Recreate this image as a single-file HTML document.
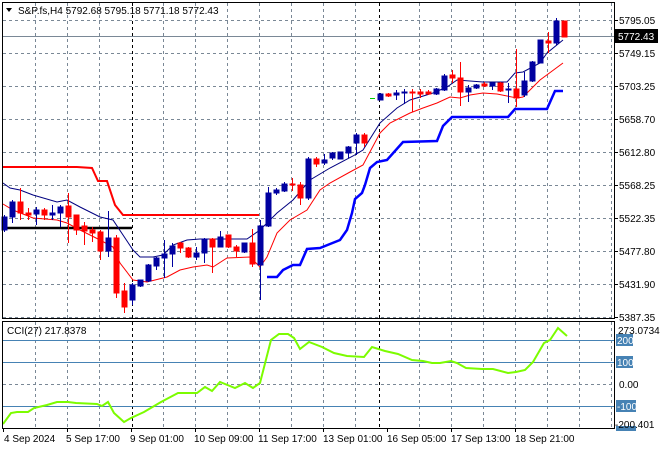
<!DOCTYPE html>
<html><head><meta charset="utf-8"><style>
html,body{margin:0;padding:0;background:#fff;width:660px;height:450px;overflow:hidden}
svg{display:block;font-family:"Liberation Sans",sans-serif;font-size:10px}
</style></head><body>
<svg width="660" height="450" viewBox="0 0 660 450" xmlns="http://www.w3.org/2000/svg">
<rect width="660" height="450" fill="#fff"/>
<g stroke="#7a8896" stroke-width="1" stroke-dasharray="3,3" shape-rendering="crispEdges">
<line x1="3" y1="20.5" x2="614" y2="20.5"/><line x1="3" y1="53.5" x2="614" y2="53.5"/><line x1="3" y1="86.5" x2="614" y2="86.5"/><line x1="3" y1="119.5" x2="614" y2="119.5"/><line x1="3" y1="152.5" x2="614" y2="152.5"/><line x1="3" y1="185.5" x2="614" y2="185.5"/><line x1="3" y1="218.5" x2="614" y2="218.5"/><line x1="3" y1="251.5" x2="614" y2="251.5"/><line x1="3" y1="284.5" x2="614" y2="284.5"/><line x1="3" y1="317.5" x2="614" y2="317.5"/>
<line x1="35.5" y1="3" x2="35.5" y2="318"/><line x1="67.5" y1="3" x2="67.5" y2="318"/><line x1="99.5" y1="3" x2="99.5" y2="318"/><line x1="163.5" y1="3" x2="163.5" y2="318"/><line x1="195.5" y1="3" x2="195.5" y2="318"/><line x1="227.5" y1="3" x2="227.5" y2="318"/><line x1="259.5" y1="3" x2="259.5" y2="318"/><line x1="291.5" y1="3" x2="291.5" y2="318"/><line x1="323.5" y1="3" x2="323.5" y2="318"/><line x1="355.5" y1="3" x2="355.5" y2="318"/><line x1="419.5" y1="3" x2="419.5" y2="318"/><line x1="451.5" y1="3" x2="451.5" y2="318"/><line x1="483.5" y1="3" x2="483.5" y2="318"/><line x1="515.5" y1="3" x2="515.5" y2="318"/><line x1="547.5" y1="3" x2="547.5" y2="318"/><line x1="579.5" y1="3" x2="579.5" y2="318"/><line x1="611.5" y1="3" x2="611.5" y2="318"/>
<line x1="3" y1="384.5" x2="614" y2="384.5"/>
<line x1="35.5" y1="322" x2="35.5" y2="428"/><line x1="67.5" y1="322" x2="67.5" y2="428"/><line x1="99.5" y1="322" x2="99.5" y2="428"/><line x1="163.5" y1="322" x2="163.5" y2="428"/><line x1="195.5" y1="322" x2="195.5" y2="428"/><line x1="227.5" y1="322" x2="227.5" y2="428"/><line x1="259.5" y1="322" x2="259.5" y2="428"/><line x1="291.5" y1="322" x2="291.5" y2="428"/><line x1="323.5" y1="322" x2="323.5" y2="428"/><line x1="355.5" y1="322" x2="355.5" y2="428"/><line x1="419.5" y1="322" x2="419.5" y2="428"/><line x1="451.5" y1="322" x2="451.5" y2="428"/><line x1="483.5" y1="322" x2="483.5" y2="428"/><line x1="515.5" y1="322" x2="515.5" y2="428"/><line x1="547.5" y1="322" x2="547.5" y2="428"/><line x1="579.5" y1="322" x2="579.5" y2="428"/><line x1="611.5" y1="322" x2="611.5" y2="428"/>
</g>
<g stroke="#000" stroke-dasharray="3,3" shape-rendering="crispEdges">
<line x1="132.5" y1="3" x2="132.5" y2="318"/><line x1="379.5" y1="3" x2="379.5" y2="318"/>
<line x1="132.5" y1="322" x2="132.5" y2="428"/><line x1="379.5" y1="322" x2="379.5" y2="428"/>
</g>
<line x1="3" y1="36.5" x2="614" y2="36.5" stroke="#7a8896" shape-rendering="crispEdges"/>
<polyline points="3,167 77,167 92,168 98,181 107,181 115,205 123,215 259,215" fill="none" stroke="#f00" stroke-width="2"/>
<line x1="3" y1="228" x2="132" y2="228" stroke="#000" stroke-width="2.5"/>
<polyline points="267,277 277,277 283,270 293,265 300,265 307,249 320,248 330,244 340,240 347,230 352,213 355,199 362,193 365,185 370,168 377,162 387,160 403,142 437,141 443,126 452,117 508,117 515,109 547,109 555,91 563,91" fill="none" stroke="#0000ff" stroke-width="2.5"/>
<polyline points="3,183 10,188 20,190 33,195 57,202 67,200 80,207 100,217 113,220 133,250 140,257 153,257 163,255 173,245 187,240 200,239 247,239 260,230 277,213 293,200 310,180 330,168 353,156 363,150 380,123 397,108 410,100 420,97 433,93 447,87 457,80 483,82 507,82 515,73 523,72 540,63 547,53 563,40" fill="none" stroke="#000080" stroke-width="1"/>
<polyline points="3,204 13,210 33,218 57,220 67,223 80,230 100,240 113,247 120,263 133,280 147,282 167,277 180,270 193,267 207,265 213,267 227,258 250,257 260,267 267,257 277,233 290,220 307,210 320,190 330,183 350,172 363,165 380,133 390,123 410,113 423,108 437,103 450,97 460,98 470,95 483,93 497,94 517,98 523,97 540,80 563,63" fill="none" stroke="#f00" stroke-width="1"/>
<g shape-rendering="crispEdges" stroke-width="1">
<g stroke="#0000a0" fill="#0000a0">
<line x1="4.5" y1="215" x2="4.5" y2="232"/><rect x="2" y="217" width="5" height="13"/>
<line x1="12.5" y1="200" x2="12.5" y2="223"/><rect x="10" y="202" width="5" height="15"/>
<line x1="36.5" y1="207" x2="36.5" y2="225"/><rect x="34" y="210" width="5" height="4"/>
<line x1="52.5" y1="205" x2="52.5" y2="220"/><rect x="50" y="213" width="5" height="2"/>
<line x1="60.5" y1="205" x2="60.5" y2="227"/><rect x="58" y="207" width="5" height="6"/>
<line x1="108.5" y1="211" x2="108.5" y2="257"/><rect x="106" y="238" width="5" height="13"/>
<line x1="132.5" y1="283" x2="132.5" y2="305"/><rect x="130" y="285" width="5" height="15"/>
<line x1="140.5" y1="280" x2="140.5" y2="287"/><rect x="138" y="280" width="5" height="6"/>
<line x1="148.5" y1="264" x2="148.5" y2="282"/><rect x="146" y="265" width="5" height="16"/>
<line x1="156.5" y1="257" x2="156.5" y2="270"/><rect x="154" y="258" width="5" height="8"/>
<line x1="164.5" y1="240" x2="164.5" y2="278"/><rect x="162" y="254" width="5" height="4"/>
<line x1="172.5" y1="243" x2="172.5" y2="267"/><rect x="170" y="246" width="5" height="8"/>
<line x1="196.5" y1="247" x2="196.5" y2="260"/><rect x="194" y="253" width="5" height="4"/>
<line x1="204.5" y1="238" x2="204.5" y2="263"/><rect x="202" y="239" width="5" height="14"/>
<line x1="220.5" y1="231" x2="220.5" y2="247"/><rect x="218" y="237" width="5" height="10"/>
<line x1="244.5" y1="243" x2="244.5" y2="253"/><rect x="242" y="243" width="5" height="9"/>
<line x1="260.5" y1="220" x2="260.5" y2="300"/><rect x="258" y="226" width="5" height="39"/>
<line x1="268.5" y1="187" x2="268.5" y2="227"/><rect x="266" y="193" width="5" height="33"/>
<line x1="276.5" y1="188" x2="276.5" y2="195"/><rect x="274" y="190" width="5" height="3"/>
<line x1="284.5" y1="182" x2="284.5" y2="192"/><rect x="282" y="184" width="5" height="7"/>
<line x1="308.5" y1="157" x2="308.5" y2="200"/><rect x="306" y="159" width="5" height="39"/>
<line x1="324.5" y1="154" x2="324.5" y2="165"/><rect x="322" y="160" width="5" height="3"/>
<line x1="332.5" y1="152" x2="332.5" y2="160"/><rect x="330" y="153" width="5" height="5"/>
<rect x="338" y="152" width="5" height="7"/>
<line x1="348.5" y1="146" x2="348.5" y2="158"/><rect x="346" y="147" width="5" height="6"/>
<line x1="356.5" y1="133" x2="356.5" y2="155"/><rect x="354" y="135" width="5" height="8"/>
<line x1="380.5" y1="93" x2="380.5" y2="100"/><rect x="378" y="94" width="5" height="6"/>
<line x1="396.5" y1="90" x2="396.5" y2="100"/><rect x="394" y="93" width="5" height="2"/>
<line x1="404.5" y1="89" x2="404.5" y2="104"/><rect x="402" y="92" width="5" height="1"/>
<line x1="436.5" y1="88" x2="436.5" y2="95"/><rect x="434" y="89" width="5" height="5"/>
<line x1="444.5" y1="74" x2="444.5" y2="91"/><rect x="442" y="76" width="5" height="14"/>
<line x1="468.5" y1="85" x2="468.5" y2="102"/><rect x="466" y="88" width="5" height="4"/>
<line x1="476.5" y1="84" x2="476.5" y2="89"/><rect x="474" y="85" width="5" height="3"/>
<line x1="492.5" y1="82" x2="492.5" y2="90"/><rect x="490" y="83" width="5" height="3"/>
<line x1="508.5" y1="83" x2="508.5" y2="103"/><rect x="506" y="89" width="5" height="1"/>
<line x1="524.5" y1="72" x2="524.5" y2="97"/><rect x="522" y="81" width="5" height="14"/>
<line x1="532.5" y1="61" x2="532.5" y2="82"/><rect x="530" y="62" width="5" height="19"/>
<rect x="538" y="40" width="5" height="23"/>
<line x1="556.5" y1="18" x2="556.5" y2="45"/><rect x="554" y="21" width="5" height="22"/>
</g>
<g stroke="#f00" fill="#f00">
<line x1="20.5" y1="188" x2="20.5" y2="220"/><rect x="18" y="202" width="5" height="11"/>
<line x1="28.5" y1="208" x2="28.5" y2="220"/><rect x="26" y="213" width="5" height="2"/>
<line x1="44.5" y1="208" x2="44.5" y2="220"/><rect x="42" y="210" width="5" height="5"/>
<line x1="68.5" y1="193" x2="68.5" y2="243"/><rect x="66" y="206" width="5" height="11"/>
<line x1="76.5" y1="215" x2="76.5" y2="235"/><rect x="74" y="215" width="5" height="15"/>
<line x1="84.5" y1="222" x2="84.5" y2="245"/><rect x="82" y="226" width="5" height="5"/>
<line x1="92.5" y1="227" x2="92.5" y2="242"/><rect x="90" y="230" width="5" height="3"/>
<line x1="100.5" y1="230" x2="100.5" y2="260"/><rect x="98" y="232" width="5" height="19"/>
<line x1="116.5" y1="235" x2="116.5" y2="298"/><rect x="114" y="238" width="5" height="55"/>
<line x1="124.5" y1="283" x2="124.5" y2="313"/><rect x="122" y="291" width="5" height="16"/>
<line x1="180.5" y1="242" x2="180.5" y2="253"/><rect x="178" y="243" width="5" height="5"/>
<line x1="188.5" y1="247" x2="188.5" y2="258"/><rect x="186" y="248" width="5" height="9"/>
<line x1="212.5" y1="238" x2="212.5" y2="273"/><rect x="210" y="239" width="5" height="8"/>
<line x1="228.5" y1="235" x2="228.5" y2="248"/><rect x="226" y="235" width="5" height="12"/>
<line x1="236.5" y1="245" x2="236.5" y2="257"/><rect x="234" y="247" width="5" height="4"/>
<line x1="252.5" y1="229" x2="252.5" y2="267"/><rect x="250" y="243" width="5" height="21"/>
<line x1="292.5" y1="178" x2="292.5" y2="191"/><rect x="290" y="184" width="5" height="1"/>
<line x1="300.5" y1="182" x2="300.5" y2="205"/><rect x="298" y="185" width="5" height="13"/>
<line x1="316.5" y1="157" x2="316.5" y2="167"/><rect x="314" y="159" width="5" height="5"/>
<line x1="364.5" y1="133" x2="364.5" y2="147"/><rect x="362" y="135" width="5" height="8"/>
<line x1="388.5" y1="93" x2="388.5" y2="97"/><rect x="386" y="94" width="5" height="2"/>
<line x1="412.5" y1="89" x2="412.5" y2="112"/><rect x="410" y="92" width="5" height="1"/>
<line x1="420.5" y1="89" x2="420.5" y2="98"/><rect x="418" y="92" width="5" height="2"/>
<line x1="428.5" y1="90" x2="428.5" y2="95"/><rect x="426" y="92" width="5" height="2"/>
<line x1="452.5" y1="70" x2="452.5" y2="83"/><rect x="450" y="75" width="5" height="3"/>
<line x1="460.5" y1="62" x2="460.5" y2="106"/><rect x="458" y="78" width="5" height="14"/>
<line x1="484.5" y1="82" x2="484.5" y2="87"/><rect x="482" y="84" width="5" height="2"/>
<line x1="500.5" y1="82" x2="500.5" y2="92"/><rect x="498" y="83" width="5" height="8"/>
<line x1="516.5" y1="49" x2="516.5" y2="107"/><rect x="514" y="89" width="5" height="9"/>
<line x1="548.5" y1="32" x2="548.5" y2="53"/><rect x="546" y="41" width="5" height="2"/>
<rect x="562" y="21" width="5" height="16"/>
</g>
<line x1="370" y1="98.5" x2="375" y2="98.5" stroke="#0c0"/>
</g>
<g stroke="#4682b4" shape-rendering="crispEdges">
<line x1="3" y1="340.5" x2="614" y2="340.5"/><line x1="3" y1="362.5" x2="614" y2="362.5"/><line x1="3" y1="406.5" x2="614" y2="406.5"/>
</g>
<polyline points="3,424 11,413 17,412 28,412 34,408 47,405 57,402 68,402 76,403 97,404 102,406 108,402 114,413 124,422 131,418 144,412 161,402 178,393 186,393 197,393 205,387 212,391 220,382 235,388 245,383 253,388 260,383 271,340 279,334 288,334 294,338 300,349 309,342 322,347 334,353 347,356 364,357 372,347 385,351 398,354 412,360 423,361 432,363 440,363 451,361 457,363 466,368 482,369 493,369 508,373 516,372 525,370 533,362 544,343 550,340 558,328 567,336" fill="none" stroke="#7cfc00" stroke-width="2"/>
<g stroke="#000" fill="none" shape-rendering="crispEdges">
<rect x="2.5" y="2.5" width="612" height="316"/>
<rect x="2.5" y="321.5" width="612" height="107"/>
</g>
<g stroke="#000" shape-rendering="crispEdges">
<line x1="614" y1="20.5" x2="618" y2="20.5"/><line x1="614" y1="53.5" x2="618" y2="53.5"/><line x1="614" y1="86.5" x2="618" y2="86.5"/><line x1="614" y1="119.5" x2="618" y2="119.5"/><line x1="614" y1="152.5" x2="618" y2="152.5"/><line x1="614" y1="185.5" x2="618" y2="185.5"/><line x1="614" y1="218.5" x2="618" y2="218.5"/><line x1="614" y1="251.5" x2="618" y2="251.5"/><line x1="614" y1="284.5" x2="618" y2="284.5"/><line x1="614" y1="317.5" x2="618" y2="317.5"/>
<line x1="3.5" y1="428" x2="3.5" y2="432"/><line x1="67.5" y1="428" x2="67.5" y2="432"/><line x1="131.5" y1="428" x2="131.5" y2="432"/><line x1="195.5" y1="428" x2="195.5" y2="432"/><line x1="259.5" y1="428" x2="259.5" y2="432"/><line x1="323.5" y1="428" x2="323.5" y2="432"/><line x1="387.5" y1="428" x2="387.5" y2="432"/><line x1="451.5" y1="428" x2="451.5" y2="432"/><line x1="515.5" y1="428" x2="515.5" y2="432"/>
</g>
<path d="M6,8 L12,8 L9,12 Z" fill="#000"/>
<text x="18" y="14" fill="#000">S&amp;P.fs,H4  5792.68 5795.18 5771.18 5772.43</text>
<text x="7" y="334" fill="#000">CCI(27) 217.8378</text>
<g fill="#000">
<text x="619" y="24">5795.05</text>
<text x="619" y="57">5749.15</text>
<text x="619" y="90">5703.25</text>
<text x="619" y="123">5658.70</text>
<text x="619" y="156">5612.80</text>
<text x="619" y="189">5568.25</text>
<text x="619" y="222">5522.35</text>
<text x="619" y="255">5477.80</text>
<text x="619" y="288">5431.90</text>
<text x="619" y="321">5387.35</text>
</g>
<rect x="615" y="29" width="43" height="14" fill="#000"/>
<text x="618" y="40" fill="#fff">5772.43</text>
<text x="618" y="334" fill="#000">273.0734</text>
<rect x="616" y="334" width="17" height="12" fill="#4682b4"/><text x="617" y="344" fill="#fff">200</text>
<rect x="616" y="356" width="17" height="12" fill="#4682b4"/><text x="617" y="366" fill="#fff">100</text>
<text x="619" y="388" fill="#000">0.00</text>
<rect x="616" y="400" width="20" height="12" fill="#4682b4"/><text x="617" y="410" fill="#fff">-100</text>
<rect x="616" y="426" width="20" height="5" fill="#4682b4"/>
<text x="615" y="428" fill="#000">-200.401</text>
<g fill="#000">
<text x="4" y="442">4 Sep 2024</text>
<text x="66" y="442">5 Sep 17:00</text>
<text x="130" y="442">9 Sep 01:00</text>
<text x="194" y="442">10 Sep 09:00</text>
<text x="258" y="442">11 Sep 17:00</text>
<text x="323" y="442">13 Sep 01:00</text>
<text x="387" y="442">16 Sep 05:00</text>
<text x="451" y="442">17 Sep 13:00</text>
<text x="515" y="442">18 Sep 21:00</text>
</g>
</svg>
</body></html>
